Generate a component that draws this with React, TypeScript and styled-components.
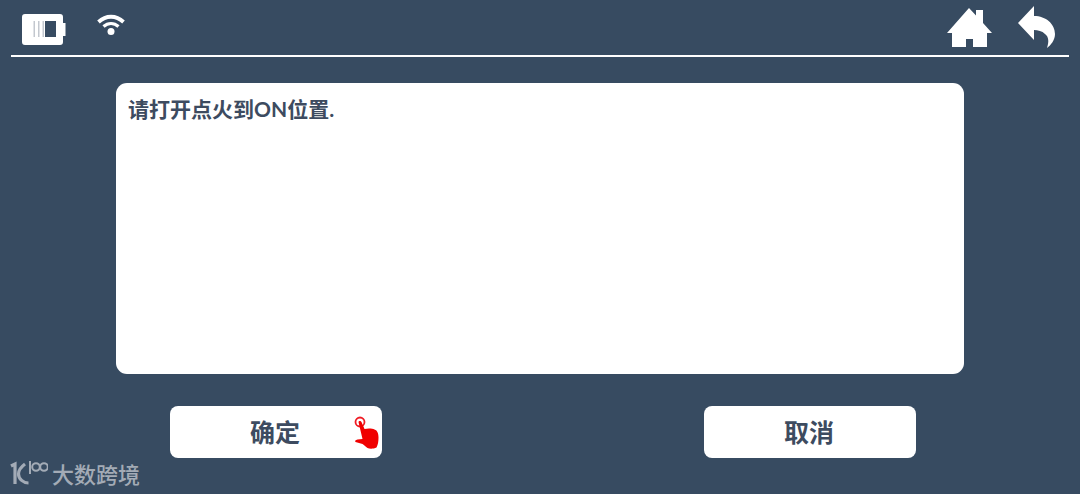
import React from "react";
import styled, { createGlobalStyle } from "styled-components";

const Global = createGlobalStyle`
  html, body { margin: 0; padding: 0; background: #374b61; }
  #root { width: 1080px; height: 494px; }
`;

const Screen = styled.div`
  position: relative;
  width: 1080px;
  height: 494px;
  overflow: hidden;
  background: #374b61;
  font-family: Lato, "Noto Sans CJK SC", sans-serif;
  display: flex;
  flex-direction: column;
  align-items: center;
`;

const Header = styled.header`
  box-sizing: border-box;
  width: 1058px;
  height: 57px;
  border-bottom: 2px solid #fff;
  display: flex;
  justify-content: space-between;
  align-items: flex-start;
`;

const Group = styled.div<{ $mr?: number }>`
  display: flex;
  align-items: flex-start;
  margin-right: ${(p) => p.$mr ?? 0}px;
`;

const Icon = styled.svg<{ $ml: number; $mt: number }>`
  display: block;
  margin-left: ${(p) => p.$ml}px;
  margin-top: ${(p) => p.$mt}px;
`;

const Panel = styled.main`
  box-sizing: border-box;
  width: 848px;
  height: 291px;
  margin-top: 26px;
  padding: 13px 12px;
  background: #fff;
  border-radius: 11px;
  color: #3d4b60;
  font-size: 21px;
  line-height: 26px;
  font-weight: 700;
`;

const Footer = styled.footer`
  margin: 32px 0 0 6px;
  width: 746px;
  display: flex;
  justify-content: space-between;
`;

const Button = styled.button`
  position: relative;
  width: 212px;
  height: 52px;
  padding: 0 2px 0 0;
  border: 0;
  border-radius: 8px;
  background: #fff;
  color: #3d4b60;
  font-family: inherit;
  font-size: 25px;
  font-weight: 700;
  line-height: 52px;
`;

const Hand = styled.svg`
  position: absolute;
  left: 182px;
  top: 9px;
`;

const Watermark = styled.div`
  position: absolute;
  left: 10px;
  bottom: 7px;
  display: flex;
  align-items: center;
  gap: 4px;
  color: #a3abb6;
`;

const WatermarkText = styled.span`
  font-family: "Noto Sans CJK SC", sans-serif;
  font-size: 22px;
  line-height: 28px;
  font-weight: 500;
`;

export default function App() {
  return (
    <Screen>
      <Global />
      <Header>
        <Group>
          <Icon $ml={11} $mt={14} width="44" height="31" viewBox="0 0 44 31">
            <path fillRule="evenodd" fill="#fff" d="M3 0h35a3 3 0 0 1 3 3v6h2.500v13H41v6a3 3 0 0 1-3 3H3a3 3 0 0 1-3-3V3a3 3 0 0 1 3-3zM7 7v16h27V7z" />
            <rect x="7" y="7" width="16" height="16" fill="#fff" />
            <rect x="11.500" y="7" width="1.500" height="16" fill="#c3c8cf" />
            <rect x="16" y="7" width="1.500" height="16" fill="#c3c8cf" />
            <rect x="20.500" y="7" width="1.500" height="16" fill="#c3c8cf" />
            <rect x="23" y="7" width="11" height="16" fill="#374b61" />
          </Icon>
          <Icon $ml={30} $mt={14} width="30" height="23" viewBox="0 0 30 23" fill="none" stroke="#fff">
            <path d="M2.500 8C10 1 20 1 27.500 8" strokeWidth="3.800" />
            <path d="M7.500 12.500C12 8.500 18 8.500 22.500 12.500" strokeWidth="3.200" />
            <circle cx="15" cy="17.500" r="3.500" fill="#fff" stroke="none" />
          </Icon>
        </Group>
        <Group $mr={13}>
          <Icon $ml={0} $mt={8} width="46" height="40" viewBox="0 0 46 40" fill="#fff">
            <path d="M0 25 22 0l7 7.600V2h7v13l9 10h-5v14H26v-8h-7v8H5V25z" />
          </Icon>
          <Icon $ml={25} $mt={6} width="38" height="43" viewBox="0 0 38 43" fill="#fff">
            <path d="M16 0v10c12 0 21 8 21 18 0 6-4 11-8 14 2-6 2-11-2-14-3-3-7-4-11-4v10L0 17z" />
          </Icon>
        </Group>
      </Header>
      <Panel>请打开点火到ON位置.</Panel>
      <Footer>
        <Button>
          确定
          <Hand width="29" height="34" viewBox="0 0 29 34" fill="none">
            <circle cx="8" cy="7" r="4.500" stroke="#ef1c25" strokeWidth="1.800" />
            <path fill="#f00000" d="M6.500 7c0-1.500 2.500-1.500 3 0l3 7c4-1 8-.5 10 .5 3 1 4 4 4 8 0 4-.5 7-2 10-3 1.500-7 1.500-9 .5-2-1-3-3-5-4l-7-2c-1-1 0-2 2-2.500l5-.5z" />
          </Hand>
        </Button>
        <Button>取消</Button>
      </Footer>
      <Watermark>
        <svg width="38" height="28" viewBox="0 0 38 28" fill="none" stroke="#a3abb6" strokeWidth="2">
          <path d="M1 7l4-2v20" strokeWidth="3.200" />
          <path d="M15 5C11 8 8.500 11 8.500 15c0 5 5 9 10 9" strokeWidth="3.200" />
          <path d="M20 2v13" />
          <circle cx="26" cy="8" r="3.800" />
          <circle cx="34" cy="8" r="3.800" />
        </svg>
        <WatermarkText>大数跨境</WatermarkText>
      </Watermark>
    </Screen>
  );
}
